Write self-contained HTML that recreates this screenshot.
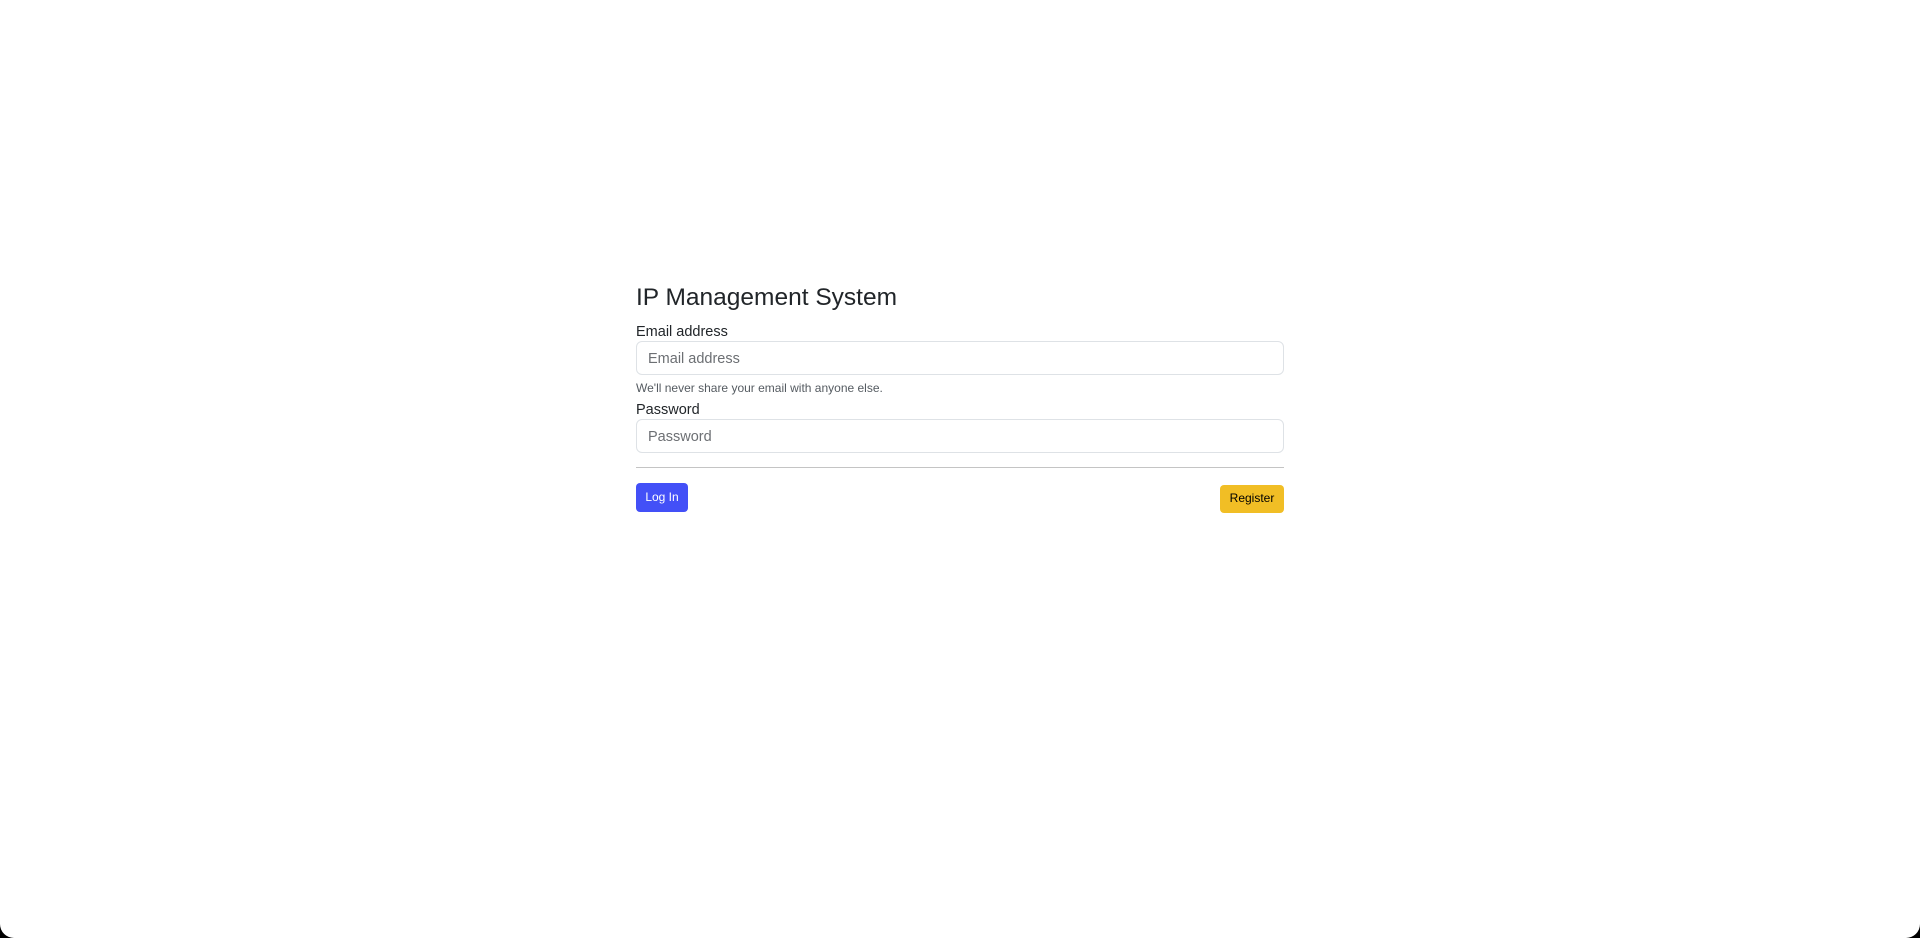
<!DOCTYPE html>
<html><head><meta charset="utf-8"><style>
html,body{margin:0;padding:0;background:#000;width:1920px;height:938px;overflow:hidden}
.page{position:absolute;left:0;top:0;width:1920px;height:938px;background:#fff;border-radius:0 0 14px 14px;font-family:"Liberation Sans",Arial,sans-serif;color:#212529}
h1{position:absolute;left:636px;top:282px;margin:0;font-size:24.5px;font-weight:400;line-height:32px;color:#212529}
.lab{position:absolute;left:636px;font-size:14.5px;line-height:18px;color:#212529}
.inp{position:absolute;left:636px;width:646px;height:32px;border:1px solid #dee2e6;border-radius:6px;background:#fff}
.inp span{position:absolute;left:11px;top:9px;font-size:14.5px;color:#6c6f73}
.help{position:absolute;left:636px;top:381px;font-size:12px;color:#555b61}
hr{position:absolute;left:636px;top:467px;width:648px;margin:0;border:0;border-top:1px solid #c4c4c4}
.btn{position:absolute;border-radius:4px;font-size:12px;text-align:center}
</style></head><body><div class="page">
<h1>IP Management System</h1>
<div class="lab" style="top:323px">Email address</div>
<div class="inp" style="top:341px"><span>Email address</span></div>
<div class="help">We'll never share your email with anyone else.</div>
<div class="lab" style="top:401px">Password</div>
<div class="inp" style="top:419px"><span>Password</span></div>
<hr>
<div class="btn" style="left:636px;top:483px;width:52px;height:29px;line-height:29px;background:#4350f7;color:#fff">Log In</div>
<div class="btn" style="left:1220px;top:485px;width:64px;height:28px;line-height:27px;background:#f1be25;color:#000">Register</div>
</div></body></html>
